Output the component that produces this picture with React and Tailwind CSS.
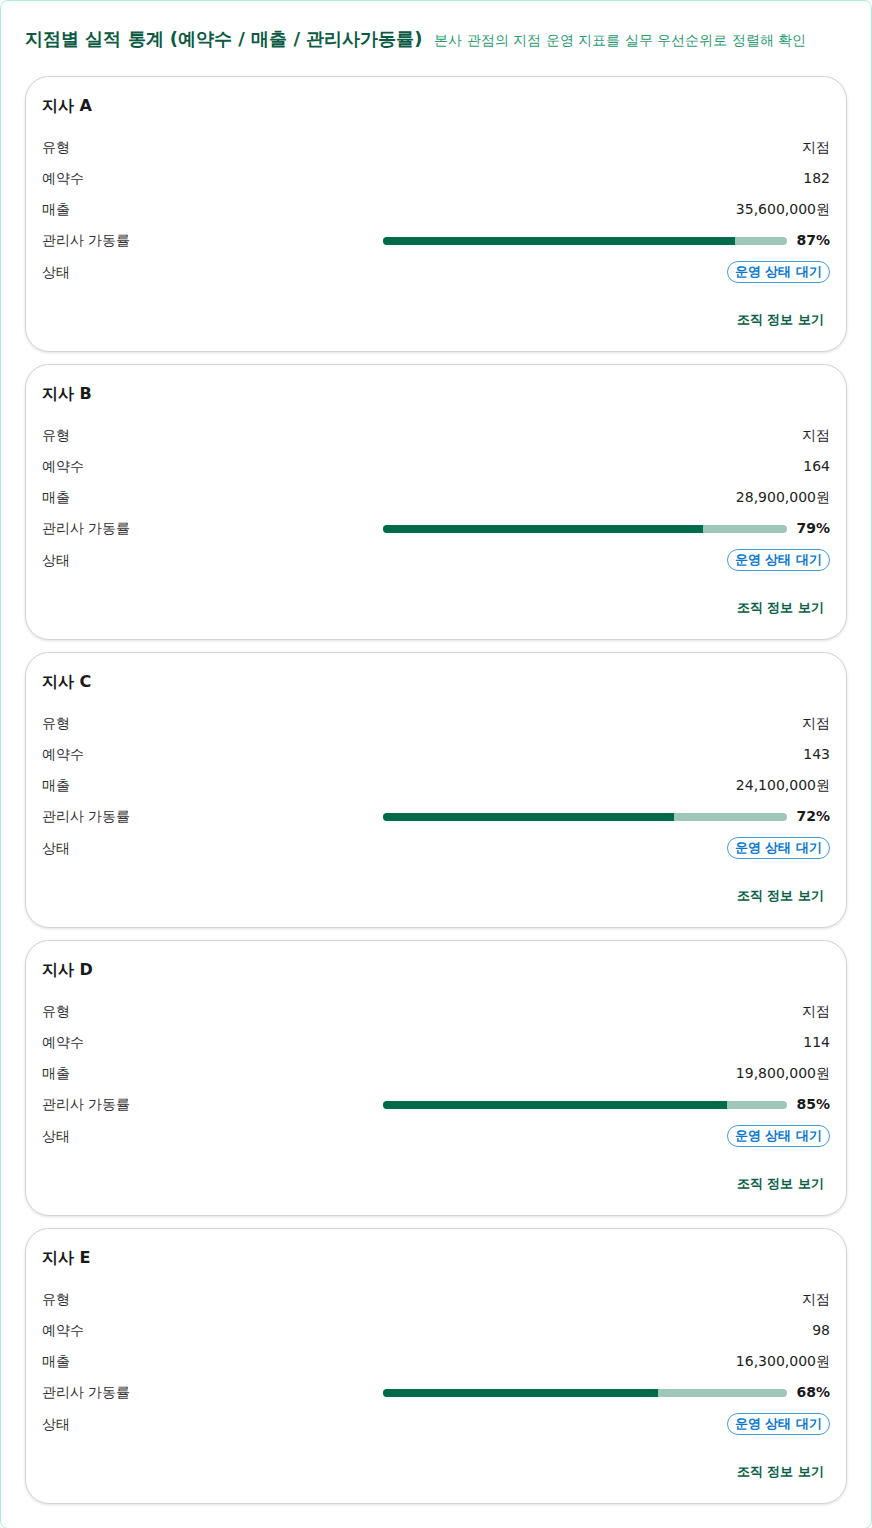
import React from "react";

const branches = [
  { name: "지사 A", type: "지점", bookings: "182", sales: "35,600,000원", rate: 87 },
  { name: "지사 B", type: "지점", bookings: "164", sales: "28,900,000원", rate: 79 },
  { name: "지사 C", type: "지점", bookings: "143", sales: "24,100,000원", rate: 72 },
  { name: "지사 D", type: "지점", bookings: "114", sales: "19,800,000원", rate: 85 },
  { name: "지사 E", type: "지점", bookings: "98", sales: "16,300,000원", rate: 68 },
];

function Row({ label, children }) {
  return (
    <div className="flex items-center justify-between min-h-[21px]">
      <span className="text-[14px] leading-[21px] font-medium text-[#2f2f2f]">{label}</span>
      <div className="flex items-center">{children}</div>
    </div>
  );
}

function Card({ b }) {
  return (
    <div className="rounded-3xl border border-[#d2d2d2] bg-white p-4 shadow-[0_1px_3px_rgba(0,0,0,0.12)]">
      <h3 className="text-[16px] leading-[26px] font-bold text-[#1a1a1a] mb-[18px]">{b.name}</h3>
      <div className="flex flex-col gap-[10px]">
        <Row label="유형">
          <span className="text-[14px] leading-[21px] text-[#222]">{b.type}</span>
        </Row>
        <Row label="예약수">
          <span className="text-[14px] leading-[21px] text-[#222]">{b.bookings}</span>
        </Row>
        <Row label="매출">
          <span className="text-[14px] leading-[21px] text-[#222]">{b.sales}</span>
        </Row>
        <Row label="관리사 가동률">
          <div className="flex items-center gap-[9px]">
            <div className="w-[404px] h-2 rounded-full bg-[#9fc7b7] overflow-hidden">
              <div className="h-full bg-[#006b4b]" style={{ width: `${b.rate}%` }} />
            </div>
            <span className="text-[14px] leading-[21px] font-bold text-[#1a1a1a]">{b.rate}%</span>
          </div>
        </Row>
        <Row label="상태">
          <span className="rounded-full border border-[#3f9fe3] px-[7px] text-[13px] leading-5 font-bold text-[#0a78d2]">
            운영 상태 대기
          </span>
        </Row>
      </div>
      <div className="mt-[22px] flex justify-end">
        <button className="px-[6px] h-[30px] text-[13px] leading-[30px] font-bold text-[#075e45]">조직 정보 보기</button>
      </div>
    </div>
  );
}

export default function App() {
  return (
    <div
      className="w-[872px] min-h-[1528px] bg-white border border-[#a8f0d2] rounded-lg p-6"
      style={{ fontFamily: '"DejaVu Sans", sans-serif' }}
    >
      <div className="flex items-baseline gap-3 mb-[23px]">
        <h2 className="text-[18px] leading-7 font-bold text-[#0b5a43]">
          지점별 실적 통계 (예약수 / 매출 / 관리사가동률)
        </h2>
        <p className="text-[14px] leading-5 text-[#2a9a70]">본사 관점의 지점 운영 지표를 실무 우선순위로 정렬해 확인</p>
      </div>
      <div className="flex flex-col gap-3">
        {branches.map((b) => (
          <Card key={b.name} b={b} />
        ))}
      </div>
    </div>
  );
}
